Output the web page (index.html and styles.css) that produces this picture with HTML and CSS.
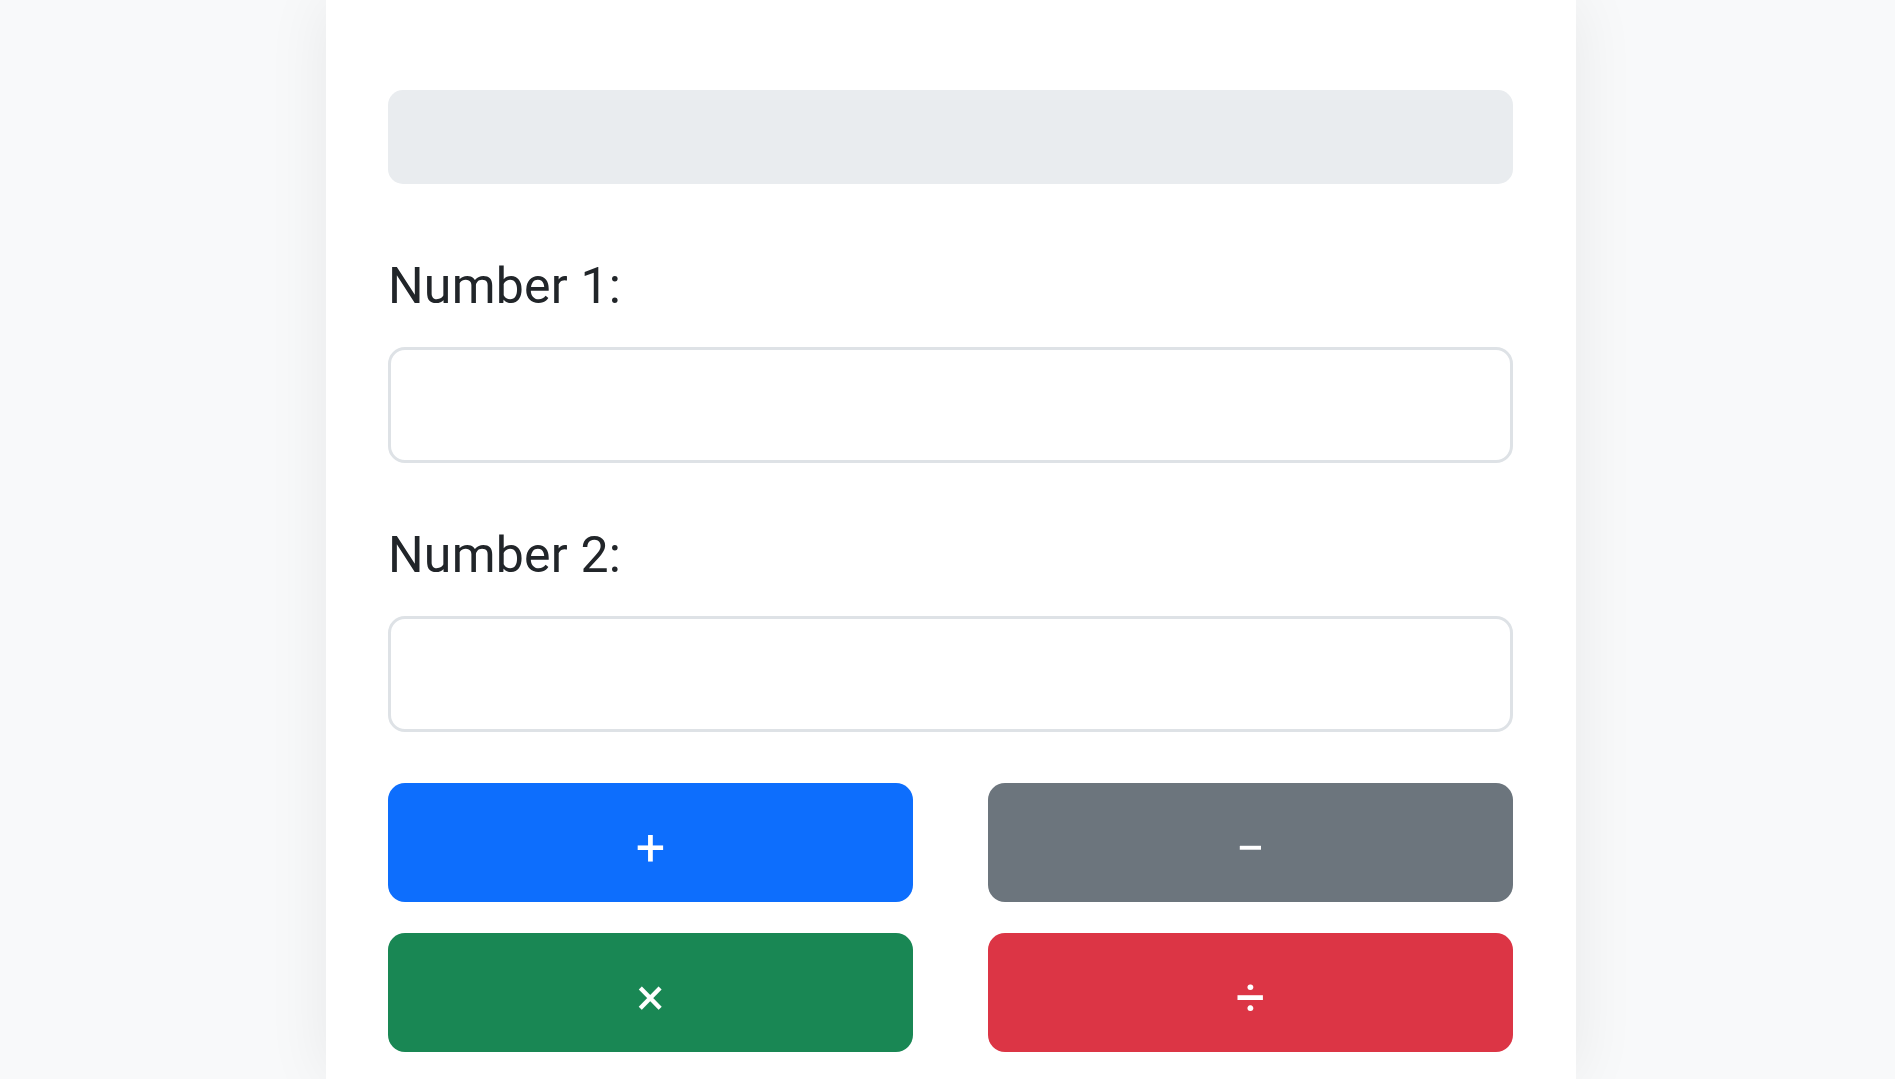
FILE: index.html
```html
<!DOCTYPE html>
<html lang="en">
<head>
<meta charset="utf-8">
<title>Calculator</title>
<link rel="stylesheet" href="styles.css">
</head>
<body>
<main class="page">
  <section class="card">
    <div class="display"></div>
    <label class="field-label" for="num1">Number 1:</label>
    <input class="field-input" id="num1" type="number">
    <label class="field-label" for="num2">Number 2:</label>
    <input class="field-input field-input-last" id="num2" type="number">
    <div class="ops">
      <button class="op op-add" type="button">+</button>
      <button class="op op-sub" type="button">−</button>
      <button class="op op-mul" type="button">×</button>
      <button class="op op-div" type="button">÷</button>
    </div>
  </section>
</main>
</body>
</html>
```

FILE: styles.css
```css
html, body {
  margin: 0;
  padding: 0;
}

body {
  background: #f8f9fa;
  font-family: Roboto, "Noto Sans", "Liberation Sans", sans-serif;
  color: #212529;
  overflow: hidden;
}

.page {
  display: flex;
  justify-content: center;
  padding-left: 7px;
  min-height: 100vh;
}

.card {
  width: 1250px;
  box-sizing: border-box;
  padding: 90px 63px 0 62px;
  background: #ffffff;
  box-shadow: 0 0 60px rgba(0, 0, 0, 0.07);
  display: flex;
  flex-direction: column;
}

.display {
  height: 94px;
  border-radius: 15px;
  background: #e9ecef;
  margin-bottom: 66px;
}

.field-label {
  display: block;
  font-size: 50px;
  letter-spacing: 0.2px;
  line-height: 73px;
  color: #212529;
  margin-bottom: 24px;
}

.field-input {
  display: block;
  height: 116px;
  box-sizing: border-box;
  border: 3px solid #dee2e6;
  border-radius: 17px;
  background: #ffffff;
  margin: 0 0 56px;
  padding: 0 24px;
  font-size: 40px;
  font-family: inherit;
  outline: none;
}

.field-input-last {
  margin-bottom: 51px;
}

.ops {
  display: grid;
  grid-template-columns: 1fr 1fr;
  column-gap: 75px;
  row-gap: 31px;
}

.op {
  height: 119px;
  border: 0;
  border-radius: 17px;
  color: #ffffff;
  font-family: inherit;
  font-size: 52px;
  font-weight: 400;
  line-height: 52px;
  padding: 10px 0 0;
  cursor: pointer;
}

.op-add { background: #0d6efd; }
.op-sub { background: #6c757d; padding-top: 12px; }
.op-mul { background: #198754; padding-top: 10px; }
.op-div { background: #dc3545; padding-top: 11px; }
```
